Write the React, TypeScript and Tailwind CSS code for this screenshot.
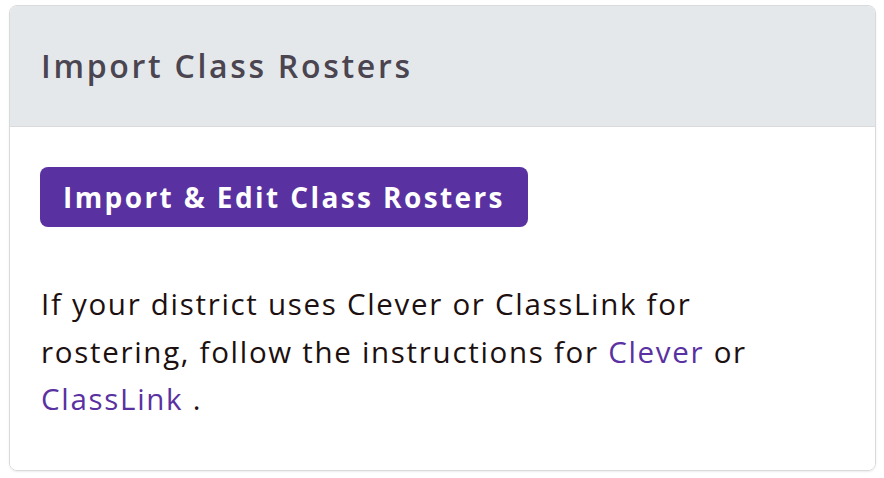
export default function App() {
  return (
    <div className="w-[884px] h-[478px] bg-white pl-[9px] pr-[8px] pt-[5px]" style={{ fontFamily: '"Open Sans", sans-serif' }}>
      <div className="w-full h-[466px] rounded-[8px] border border-[#d9dadb] overflow-hidden flex flex-col shadow-[0_1px_2px_rgba(0,0,0,0.08)]">
        <div className="h-[121px] shrink-0 bg-[#e5e8eb] border-b border-[#d9dadb] flex items-center px-[31px]">
          <h2 className="text-[32px] font-semibold text-[#4a4550] tracking-[2.7px]">Import Class Rosters</h2>
        </div>
        <div className="flex-1 bg-white px-[30px] pt-[40px]">
          <button className="h-[60px] px-[23px] rounded-[8px] bg-[#5a31a1] text-white text-[28px] font-bold tracking-[2.4px]">
            Import &amp; Edit Class Rosters
          </button>
          <p className="mt-[53px] pl-[1px] text-[29.5px] leading-[47.5px] text-[#1c1010] tracking-[1.7px] w-[780px]">
            If your district uses Clever or ClassLink for rostering, follow the instructions for{" "}
            <a href="#" className="text-[#5a31a1]">Clever</a> or{" "}
            <a href="#" className="text-[#5a31a1]">ClassLink</a> .
          </p>
        </div>
      </div>
    </div>
  );
}
